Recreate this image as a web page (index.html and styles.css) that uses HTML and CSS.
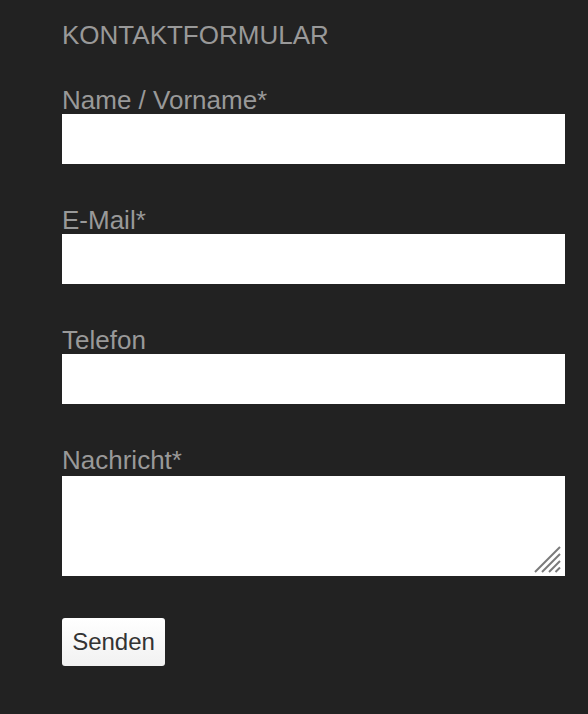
FILE: index.html
```html
<!DOCTYPE html>
<html lang="de">
<head>
<meta charset="utf-8">
<title>Kontaktformular</title>
<link rel="stylesheet" href="styles.css">
</head>
<body>
<section class="contact">
  <h2 class="contact-title">KONTAKTFORMULAR</h2>
  <form class="contact-form">
    <div class="field">
      <label class="field-label" for="name">Name / Vorname*</label>
      <input class="field-input" id="name" type="text">
    </div>
    <div class="field">
      <label class="field-label" for="email">E-Mail*</label>
      <input class="field-input" id="email" type="email">
    </div>
    <div class="field">
      <label class="field-label" for="tel">Telefon</label>
      <input class="field-input" id="tel" type="tel">
    </div>
    <div class="field">
      <label class="field-label" for="msg">Nachricht*</label>
      <div class="textarea-wrap">
        <textarea class="field-textarea" id="msg"></textarea>
        <svg class="resize-handle" width="28" height="28" viewBox="0 0 28 28" aria-hidden="true">
          <line x1="1" y1="27" x2="26" y2="2" />
          <line x1="8" y1="27" x2="26" y2="9" />
          <line x1="15" y1="27" x2="26" y2="16" />
          <line x1="21.5" y1="27" x2="26" y2="22.5" />
        </svg>
      </div>
    </div>
    <button class="submit" type="button">Senden</button>
  </form>
</section>
</body>
</html>
```

FILE: styles.css
```css
html, body {
  margin: 0;
  padding: 0;
  background: #222222;
}

body {
  font-family: "Liberation Sans", Arial, sans-serif;
  color: #999999;
}

.contact {
  padding: 20px 0 0 62px;
  width: 503px;
}

.contact-title {
  margin: 0;
  font-size: 26px;
  font-weight: normal;
  line-height: 30px;
  color: #999999;
}

.contact-form {
  display: flex;
  flex-direction: column;
  padding-top: 37px;
}

.field {
  display: flex;
  flex-direction: column;
  margin-bottom: 43px;
}

.field-label {
  display: block;
  font-size: 26px;
  line-height: 27px;
  color: #999999;
}

.field-input {
  display: block;
  box-sizing: border-box;
  width: 503px;
  height: 50px;
  margin: 0;
  border: none;
  background: #ffffff;
  padding: 0 10px;
  font-size: 20px;
  outline: none;
}

.textarea-wrap {
  position: relative;
  width: 503px;
  height: 100px;
  margin-top: 2px;
}

.field-textarea {
  display: block;
  box-sizing: border-box;
  width: 503px;
  height: 100px;
  margin: 0;
  border: none;
  background: #ffffff;
  resize: none;
  outline: none;
}

.resize-handle {
  position: absolute;
  right: 3px;
  bottom: 3px;
  stroke: #7a7a7a;
  stroke-width: 2;
}

.submit {
  align-self: flex-start;
  box-sizing: border-box;
  width: 103px;
  height: 48px;
  margin-top: -1px;
  padding: 0;
  border: none;
  border-radius: 3px;
  background: linear-gradient(#ffffff, #f1f1f1);
  font-family: "Liberation Sans", Arial, sans-serif;
  font-size: 24px;
  color: #333333;
}
```
